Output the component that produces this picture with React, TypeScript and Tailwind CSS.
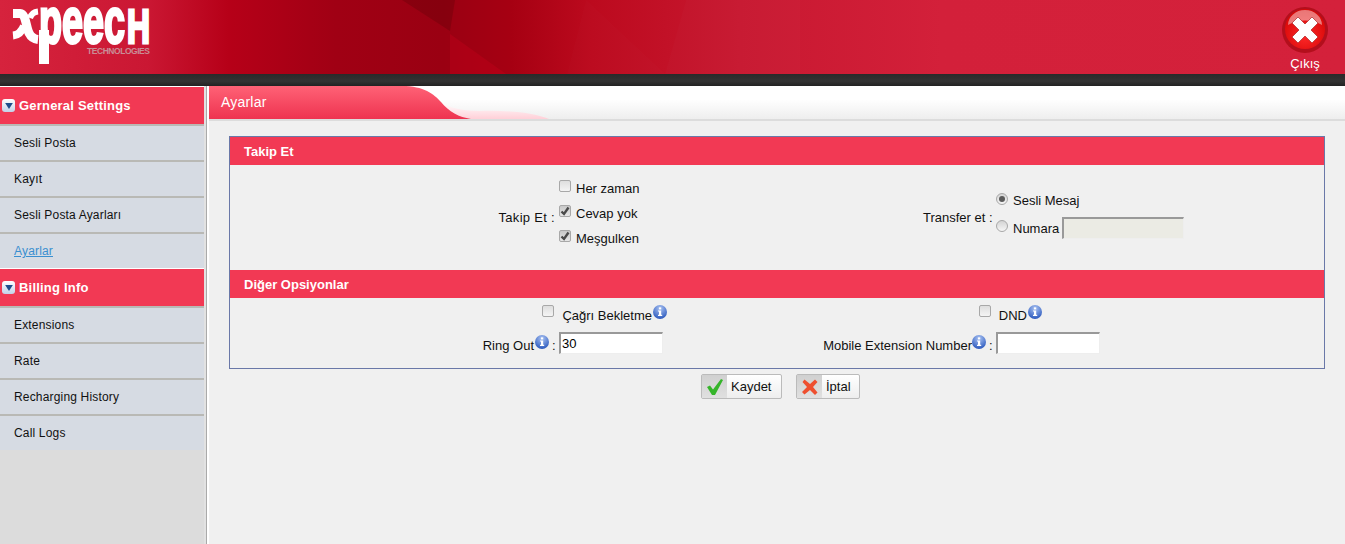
const font = { fontFamily: '"Liberation Sans", Arial, sans-serif' };

function Caret() {
  return (
    <span className="flex h-[13px] w-[13px] shrink-0 items-center justify-center rounded-[3px] bg-gradient-to-b from-white to-[#c3d1e8]">
      <svg width="8" height="6" viewBox="0 0 9 7">
        <path d="M0 0h9L4.5 7z" fill="#1f4e8c" />
      </svg>
    </span>
  );
}

function InfoIcon() {
  return (
    <svg width="14" height="14" viewBox="0 0 14 14" className="shrink-0">
      <defs>
        <radialGradient id="infoBg" cx="50%" cy="25%" r="75%">
          <stop offset="0%" stopColor="#a9c2f2" />
          <stop offset="100%" stopColor="#2a58bd" />
        </radialGradient>
      </defs>
      <circle cx="7" cy="7" r="7" fill="url(#infoBg)" />
      <rect x="5.9" y="2.4" width="2.3" height="2" fill="#fff" />
      <path d="M5 5.4h3.2v4.4h1v1.2H5V9.8h1V6.6H5z" fill="#fff" />
    </svg>
  );
}

function SideHeader({ label }: { label: string }) {
  return (
    <div className="flex h-[38px] items-center gap-[4px] border-t border-white bg-[#f23954] pl-[2px] text-[13px] font-bold tracking-[0.2px] text-white">
      <Caret />
      <span>{label}</span>
    </div>
  );
}

function SideItem({ label, active }: { label: string; active?: boolean }) {
  return (
    <div className="flex h-[36px] items-center border-t-[2px] border-[#b9b9b5] pl-[14px]">
      <span className={active ? 'text-[#3a8fd0] underline' : 'text-[#111]'}>{label}</span>
    </div>
  );
}

function Sidebar() {
  return (
    <aside className="flex w-[204px] shrink-0 flex-col bg-[#dcdcdc] text-[12px] tracking-[0.17px]">
      <SideHeader label="Gerneral Settings" />
      <div className="bg-[#d6dbe3]">
        <SideItem label="Sesli Posta" />
        <SideItem label="Kayıt" />
        <SideItem label="Sesli Posta Ayarları" />
        <SideItem label="Ayarlar" active />
      </div>
      <SideHeader label="Billing Info" />
      <div className="bg-[#d6dbe3]">
        <SideItem label="Extensions" />
        <SideItem label="Rate" />
        <SideItem label="Recharging History" />
        <SideItem label="Call Logs" />
      </div>
    </aside>
  );
}

function Box({ checked, className }: { checked?: boolean; className: string }) {
  return (
    <span className={`flex h-[12px] w-[12px] shrink-0 items-center justify-center rounded-[2px] border border-[#a8a8a8] bg-gradient-to-b ${checked ? 'from-[#c8c8c8] to-[#e6e6e6]' : 'from-[#dedede] to-[#f4f4f4]'} ${className}`}>
      {checked && (
        <svg width="10" height="10" viewBox="0 0 10 10">
          <path d="M1.5 5.5L4 8l4.5-6.5" fill="none" stroke="#4a4a4a" strokeWidth="2.4" />
        </svg>
      )}
    </span>
  );
}

function Radio({ checked, className }: { checked?: boolean; className: string }) {
  return (
    <span className={`flex h-[12px] w-[12px] shrink-0 items-center justify-center rounded-full border border-[#a8a8a8] bg-gradient-to-b from-[#d4d4d4] to-[#f6f6f6] ${className}`}>
      {checked && <span className="h-[6px] w-[6px] rounded-full bg-[#5a5a5a]" />}
    </span>
  );
}

function Field({ value, disabled, w }: { value?: string; disabled?: boolean; w: string }) {
  return (
    <input
      readOnly
      value={value ?? ''}
      disabled={disabled}
      className={`h-[22px] ${w} shrink-0 border border-t-[2px] border-l-[2px] border-t-[#999] border-l-[#999] border-r-[#eee] border-b-[#eee] px-[1px] text-[13px] text-black outline-none ${disabled ? 'bg-[#ebebe4]' : 'bg-white'}`}
    />
  );
}

function Bar({ label }: { label: string }) {
  return (
    <div className="flex h-[28px] items-center bg-[#f23954] pl-[14px] pt-[1px] text-[13px] font-bold text-white">
      {label}
    </div>
  );
}

function Logo() {
  return (
    <svg width="152" height="70" viewBox="0 0 152 70" className="block overflow-visible">
      <path d="M13 13.5H20C26 14 26 27 29 33C31 37 33 39 38 39.5" fill="none" stroke="#fff" strokeWidth="9" />
      <path d="M38 11.5C33 12 31 15 30 18" fill="none" stroke="#fff" strokeWidth="6" />
      <path d="M24 26C22 31 19 35 13 35.5" fill="none" stroke="#fff" strokeWidth="8" />
      <text x="39" y="42.5" fontFamily="Liberation Sans, Arial, sans-serif" fontWeight="700" fontSize="64" fill="#fff" stroke="#fff" strokeWidth="3" textLength="86" lengthAdjust="spacingAndGlyphs">peec</text>
      <rect x="39" y="30" width="10" height="34" fill="#fff" />
      <text x="127" y="42.5" fontFamily="Liberation Sans, Arial, sans-serif" fontWeight="700" fontSize="48" fill="#fff" stroke="#fff" strokeWidth="3" textLength="23" lengthAdjust="spacingAndGlyphs">H</text>
      <text x="87" y="54" fontFamily="Liberation Sans, Arial, sans-serif" fontWeight="700" fontSize="8.5" fill="#c98d96" textLength="63" lengthAdjust="spacing">TECHNOLOGIES</text>
    </svg>
  );
}

function ExitIcon() {
  return (
    <svg width="46" height="46" viewBox="0 0 46 46">
      <defs>
        <radialGradient id="exitBg" cx="50%" cy="65%" r="60%">
          <stop offset="0%" stopColor="#ff2a2a" />
          <stop offset="100%" stopColor="#d80808" />
        </radialGradient>
      </defs>
      <circle cx="23" cy="23" r="23" fill="#b30f1c" />
      <circle cx="23" cy="22" r="20" fill="url(#exitBg)" />
      <path d="M6 18a17 15 0 0 1 34 0c-10-6-24-6-34 0z" fill="#fff" opacity="0.45" />
      <path d="M16 10l7 7 7-7 6 6-7 7 7 7-6 6-7-7-7 7-6-6 7-7-7-7z" fill="#fff" stroke="#a01010" strokeWidth="0.6" strokeLinejoin="round" />
    </svg>
  );
}

function HeaderFacets() {
  return (
    <svg width="1345" height="74" viewBox="0 0 1345 74" className="absolute left-0 top-0">
      <polygon points="402,0 455,0 450,31" fill="#5a0008" opacity="0.3" />
      <polygon points="450,34 506,74 450,74" fill="#c8001c" opacity="0.35" />
      <polygon points="586,0 665,74 567,74" fill="#fff" opacity="0.012" />
      <polygon points="686,0 800,0 800,74 665,74" fill="#fff" opacity="0.015" />
    </svg>
  );
}

function TitleShape() {
  return (
    <svg width="340" height="33" viewBox="0 0 340 33" className="absolute left-0 top-0">
      <defs>
        <linearGradient id="tabFill" x1="0" y1="0" x2="0" y2="1">
          <stop offset="0%" stopColor="#ff6276" />
          <stop offset="100%" stopColor="#ee3350" />
        </linearGradient>
        <linearGradient id="tabFade" x1="0" y1="0" x2="0" y2="1">
          <stop offset="0%" stopColor="#fff" />
          <stop offset="100%" stopColor="#ffd0d8" />
        </linearGradient>
      </defs>
      <path d="M232 16C240 26 250 31 262 33H340C325 27 300 24 270 25C255 25 240 22 232 16z" fill="url(#tabFade)" />
      <path d="M0 0H193C215 0 225 8 232 16C240 26 250 31 262 33H0z" fill="url(#tabFill)" />
    </svg>
  );
}

export default function App() {
  return (
    <div className="flex h-[544px] flex-col overflow-hidden bg-[#f0f0f0] text-[13px] text-[#111]" style={font}>
      <header className="relative flex h-[74px] shrink-0 items-start justify-between bg-[linear-gradient(90deg,#d6233d_0%,#ca1733_11%,#b60018_17%,#a00014_25%,#9a0012_33%,#a60012_38%,#bc0a1e_44%,#c81830_55%,#d3203a_70%,#d4213b_100%)]">
        <HeaderFacets />
        <div className="relative">
          <Logo />
        </div>
        <div className="relative flex w-[80px] flex-col items-center pt-[7px] text-white">
          <ExitIcon />
          <span className="pt-[4px] leading-[14px]">Çıkış</span>
        </div>
      </header>
      <div className="h-[12px] shrink-0 bg-[linear-gradient(180deg,#2a2a2a,#333_60%,#222)]" />

      <div className="flex min-h-0 flex-1">
        <Sidebar />
        <div className="w-[2px] shrink-0 bg-[#e2e2e2]" />
        <div className="w-[1px] shrink-0 bg-[#aaa]" />
        <div className="w-[2px] shrink-0 bg-white" />
        <main className="flex min-w-0 flex-1 flex-col">
          <div className="relative h-[35px] shrink-0 border-b-[2px] border-[#dcdcdc] bg-gradient-to-b from-white from-40% to-[#eee]">
            <TitleShape />
            <div className="relative flex h-[33px] items-center pl-[12px] text-[14px] tracking-[0.2px] text-white">
              Ayarlar
            </div>
          </div>

          <div className="pl-[20px] pr-[20px] pt-[15px]">
            <section className="border border-[#6a78a8]">
              <Bar label="Takip Et" />
              <div className="flex h-[105px] items-center">
                <span className="w-[329px] pr-[4px] text-right tracking-[0.3px]">Takip Et :</span>
                <div className="mb-[7px] flex w-[364px] flex-col gap-[7px]">
                  <label className="flex h-[18px] items-center gap-[5px]"><Box className="mb-[6px]" />Her zaman</label>
                  <label className="flex h-[18px] items-center gap-[5px]"><Box checked className="mb-[6px]" />Cevap yok</label>
                  <label className="flex h-[18px] items-center gap-[5px]"><Box checked className="mb-[6px]" />Meşgulken</label>
                </div>
                <span className="w-[73px] whitespace-nowrap pr-[4px] text-right">Transfer et :</span>
                <div className="mb-[6px] flex flex-col gap-[6px]">
                  <label className="flex h-[22px] items-center gap-[5px]"><Radio checked className="mb-[3px]" />Sesli Mesaj</label>
                  <label className="flex h-[22px] items-center gap-[5px]">
                    <Radio className="mb-[5px]" />
                    <span className="pt-[1px]">Numara</span>
                    <Field disabled w="ml-[-2px] mb-[2px] w-[122px]" />
                  </label>
                </div>
              </div>
              <Bar label="Diğer Opsiyonlar" />
              <div className="flex h-[70px] flex-col gap-[5px] pt-[7px]">
                <div className="flex h-[22px] items-center">
                  <div className="flex w-[437px] items-center justify-end">
                    <Box className="mb-[10px]" />
                    <span className="pl-[8px]">Çağrı Bekletme</span>
                    <span className="mb-[8px] ml-[1px]"><InfoIcon /></span>
                  </div>
                  <div className="flex w-[375px] items-center justify-end">
                    <Box className="mb-[10px]" />
                    <span className="pl-[8px]">DND</span>
                    <span className="mb-[8px] ml-[1px]"><InfoIcon /></span>
                  </div>
                </div>
                <div className="flex h-[22px] items-center">
                  <div className="flex w-[433px] items-center justify-end">
                    <span className="pt-[6px]">Ring Out</span>
                    <span className="mb-[2px] ml-[1px]"><InfoIcon /></span>
                    <span className="w-[10px] pl-[3px] pt-[6px]">:</span>
                    <Field value="30" w="w-[104px]" />
                  </div>
                  <div className="flex w-[437px] items-center justify-end">
                    <span className="pt-[6px]">Mobile Extension Number</span>
                    <span className="mb-[2px]"><InfoIcon /></span>
                    <span className="w-[10px] pl-[3px] pt-[6px]">:</span>
                    <Field w="w-[104px]" />
                  </div>
                </div>
              </div>
            </section>

            <div className="flex justify-center gap-[14px] pl-[7px] pt-[5px]">
              <button className="flex h-[25px] w-[81px] items-center rounded-[2px] border border-[#bbb] bg-gradient-to-b from-white to-[#eee]">
                <span className="flex h-full w-[25px] items-center justify-center bg-gradient-to-b from-[#d0d0d0] to-[#e0e0e0]">
                  <svg width="20" height="20" viewBox="0 0 20 20">
                    <path d="M2 10l3-1.5 3 4L16 2l2 1-8 15H7z" fill="#35b52a" />
                  </svg>
                </span>
                <span className="pl-[4px]">Kaydet</span>
              </button>
              <button className="flex h-[25px] w-[64px] items-center rounded-[2px] border border-[#bbb] bg-gradient-to-b from-white to-[#eee]">
                <span className="flex h-full w-[25px] items-center justify-center bg-gradient-to-b from-[#d0d0d0] to-[#e0e0e0]">
                  <svg width="18" height="18" viewBox="0 0 18 18">
                    <path d="M3.5 1.5L9 6l5-4.5 2.5 2.5-4.5 5 4.5 5.5-2.5 2.5L9 12l-5.5 4.5L1 14l5-5-4.5-5z" fill="#ee4f2f" />
                  </svg>
                </span>
                <span className="pl-[4px]">İptal</span>
              </button>
            </div>
          </div>
        </main>
      </div>
    </div>
  );
}
